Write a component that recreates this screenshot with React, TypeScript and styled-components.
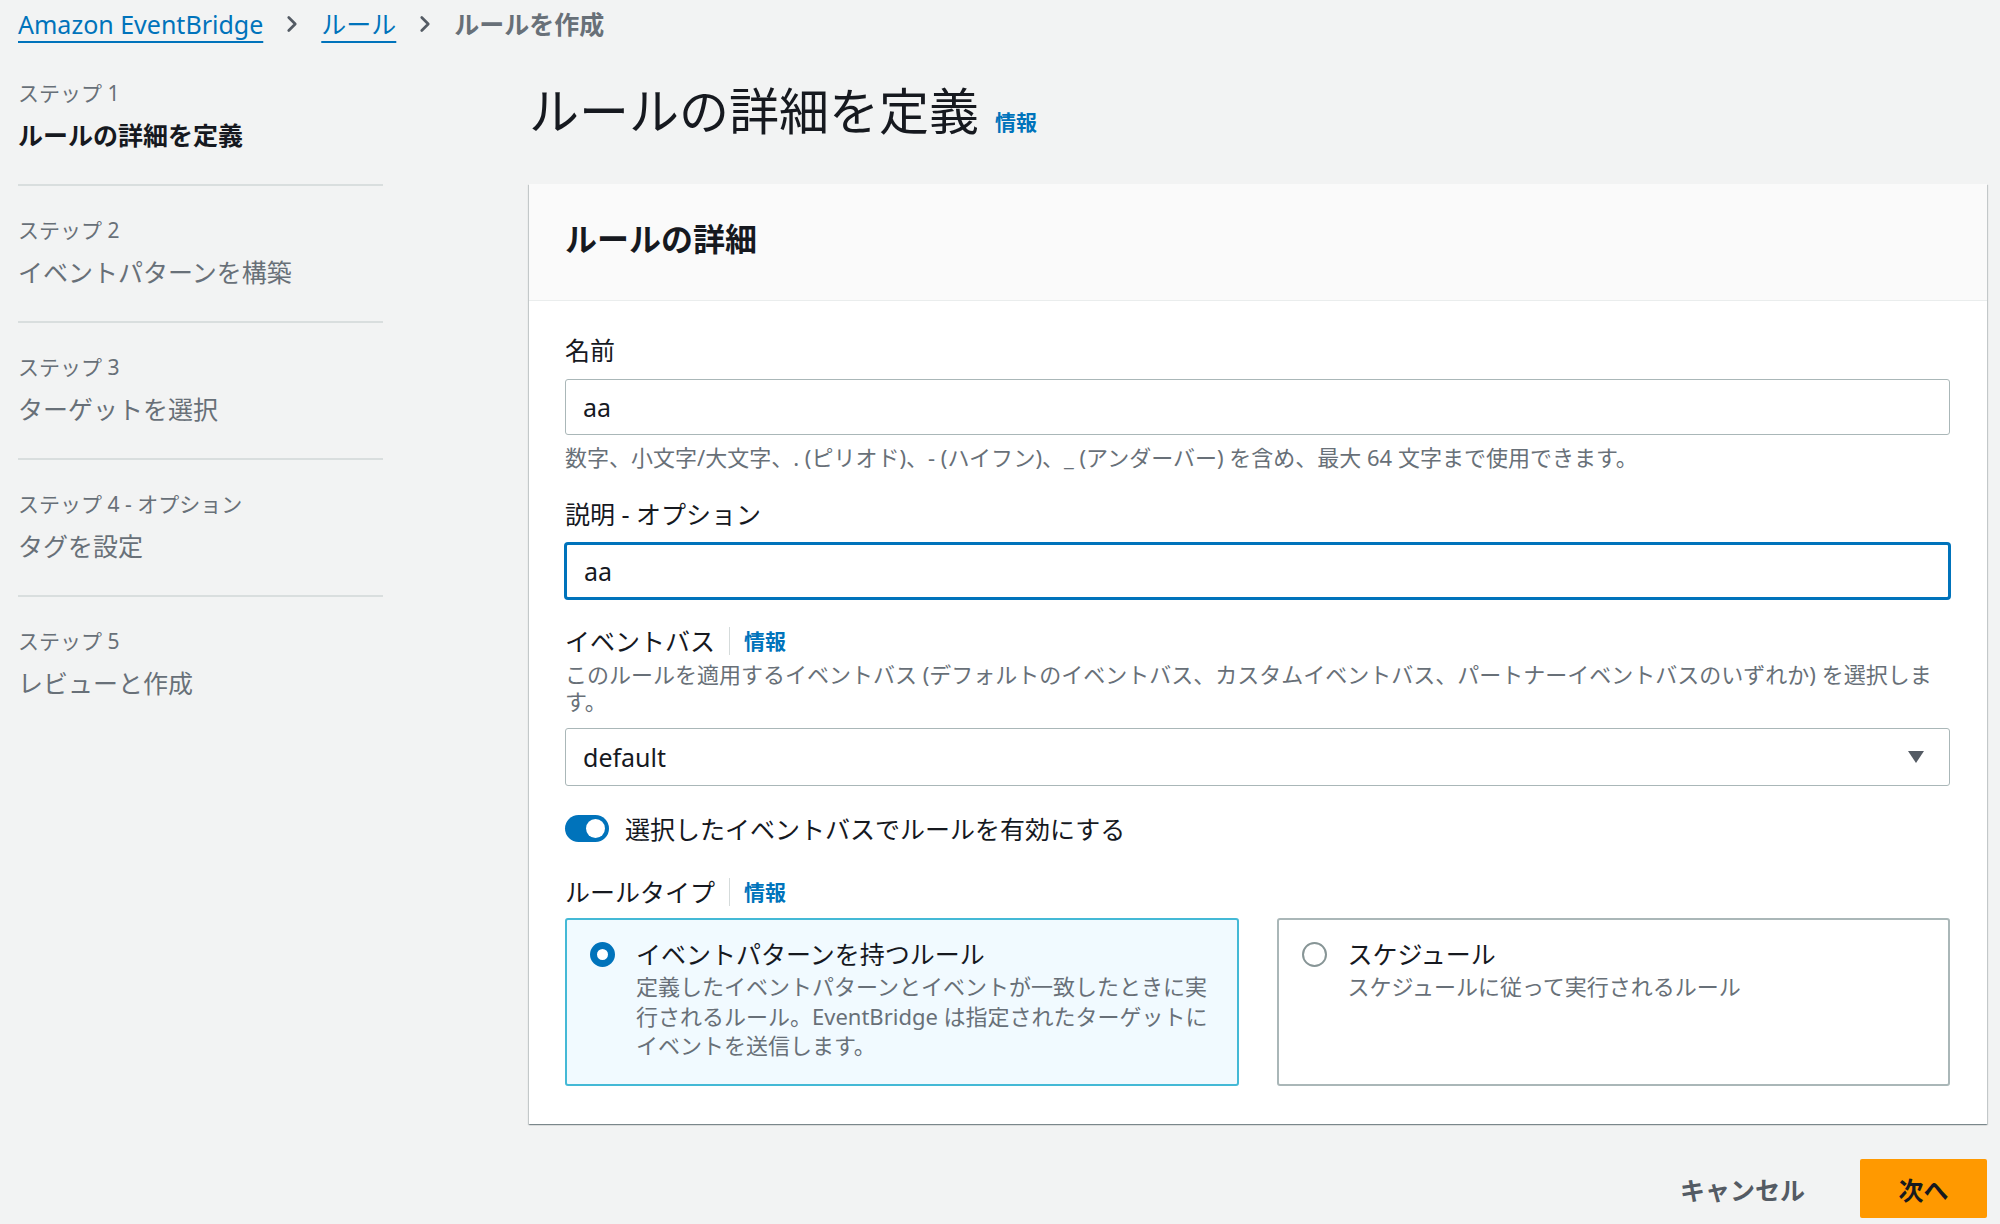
import React from 'react';
import styled, { createGlobalStyle } from 'styled-components';
import { ChevronRight } from 'lucide-react';

const GlobalStyle = createGlobalStyle`
    html, body {
        margin: 0;
        padding: 0;
        background: #f2f3f3;
    }
    body {
        font-family: "Noto Sans", "Noto Sans CJK JP", sans-serif;
        color: #16191f;
    }
    * {
        box-sizing: border-box;
    }
`;

const Page = styled.div`
    padding: 6px 13px 0 18px;
    min-height: 1224px;
`;

const Breadcrumbs = styled.nav`
    display: flex;
    align-items: center;
    height: 36px;
    font-size: 25px;
    gap: 16px;
`;

const CrumbLink = styled.a`
    color: #0073bb;
    text-decoration: underline;
    text-decoration-thickness: 2px;
    text-underline-offset: 7px;
    line-height: 36px;
`;

const CrumbCurrent = styled.span`
    color: #687078;
    font-weight: 700;
    line-height: 36px;
`;

const Layout = styled.div`
    display: grid;
    grid-template-columns: 365px 1fr;
    column-gap: 146px;
    margin-top: 7px;
`;

const Steps = styled.ol`
    list-style: none;
    margin: 0;
    padding: 0;
`;

const Step = styled.li`
    padding: 28px 0 29px;
    border-bottom: 2px solid #d9dede;

    &:last-child {
        border-bottom: none;
    }
`;

const StepLabel = styled.div`
    font-size: 21px;
    line-height: 32px;
    color: #687078;
`;

const StepTitle = styled.div<{ active?: boolean }>`
    margin-top: 6px;
    font-size: 25px;
    line-height: 40px;
    color: ${(props) => (props.active ? '#16191f' : '#687078')};
    font-weight: ${(props) => (props.active ? 700 : 400)};
`;

const Main = styled.main`
    display: flex;
    flex-direction: column;
`;

const TitleRow = styled.div`
    display: flex;
    align-items: baseline;
    padding-top: 30px;
    margin-bottom: 41px;
`;

const PageTitle = styled.h1`
    margin: 0;
    font-size: 50px;
    line-height: 64px;
    font-weight: 400;
    color: #16191f;
`;

const Info = styled.a`
    color: #0073bb;
    font-size: 21px;
    font-weight: 700;
    text-decoration: none;
    margin-left: 16px;
`;

const Container = styled.section`
    background: #ffffff;
    box-shadow: 0 1px 1px 0 rgba(0, 28, 36, 0.3), 1px 1px 1px 0 rgba(0, 28, 36, 0.15),
        -1px 1px 1px 0 rgba(0, 28, 36, 0.15);
`;

const ContainerHeader = styled.header`
    background: #fafafa;
    border-bottom: 1px solid #eaeded;
    padding: 35px 36px 41px;
`;

const ContainerTitle = styled.h2`
    margin: 0;
    font-size: 32px;
    line-height: 40px;
    font-weight: 700;
`;

const ContainerBody = styled.div`
    display: flex;
    flex-direction: column;
    gap: 24px;
    padding: 31px 37px 38px 36px;
`;

const Field = styled.div`
    display: flex;
    flex-direction: column;
`;

const LabelRow = styled.div`
    display: flex;
    align-items: center;
    height: 36px;
`;

const Label = styled.label`
    font-size: 25px;
    line-height: 36px;
    color: #16191f;
`;

const LabelInfo = styled.a`
    color: #0073bb;
    font-size: 21px;
    font-weight: 700;
    text-decoration: none;
    margin-left: 14px;
    padding-left: 14px;
    border-left: 1px solid #d5dbdb;
    line-height: 28px;
`;

const Description = styled.div`
    margin-top: 2px;
    font-size: 22px;
    line-height: 27px;
    color: #687078;
`;

const Hint = styled.div`
    margin-top: 7px;
    font-size: 22px;
    line-height: 30px;
    color: #687078;
`;

const TextInput = styled.input<{ focused?: boolean }>`
    margin-top: 11px;
    height: 56px;
    width: 100%;
    padding: 0 17px;
    font-family: inherit;
    font-size: 25px;
    color: #16191f;
    background: #ffffff;
    border-radius: 3px;
    outline: none;
    border: ${(props) => (props.focused ? '2px solid #0073bb' : '1px solid #aab7b8')};
    box-shadow: ${(props) => (props.focused ? '0 0 0 1px #0073bb' : 'none')};
`;

const Select = styled.div`
    margin-top: 13px;
    height: 58px;
    display: flex;
    align-items: center;
    justify-content: space-between;
    padding: 0 24px 0 17px;
    border: 1px solid #aab7b8;
    border-radius: 3px;
    font-size: 25px;
    color: #16191f;
`;

const ToggleRow = styled.div`
    display: flex;
    align-items: center;
    gap: 16px;
    height: 36px;
    margin-bottom: 4px;
    font-size: 25px;
`;

const Toggle = styled.span<{ on?: boolean }>`
    position: relative;
    width: 44px;
    height: 27px;
    border-radius: 14px;
    background: ${(props) => (props.on ? '#0073bb' : '#aab7b8')};
    flex-shrink: 0;

    &::after {
        content: '';
        position: absolute;
        top: 4px;
        left: ${(props) => (props.on ? '21px' : '4px')};
        width: 19px;
        height: 19px;
        border-radius: 50%;
        background: #ffffff;
    }
`;

const Tiles = styled.div`
    margin-top: 8px;
    display: grid;
    grid-template-columns: 1fr 1fr;
    column-gap: 38px;
`;

const Tile = styled.div<{ selected?: boolean }>`
    display: flex;
    gap: 21px;
    padding: 16px 18px 22px 23px;
    min-height: 168px;
    border-radius: 3px;
    border: 2px solid ${(props) => (props.selected ? '#44b9d6' : '#aab7b8')};
    background: ${(props) => (props.selected ? '#f1faff' : '#ffffff')};
`;

const Radio = styled.span<{ checked?: boolean }>`
    width: 25px;
    height: 25px;
    margin-top: 6px;
    border-radius: 50%;
    flex-shrink: 0;
    background: #ffffff;
    border: ${(props) => (props.checked ? '7px solid #0073bb' : '2px solid #879596')};
`;

const TileText = styled.div`
    display: flex;
    flex-direction: column;
`;

const TileTitle = styled.div`
    font-size: 25px;
    line-height: 36px;
    color: #16191f;
`;

const TileDesc = styled.div`
    font-size: 22px;
    line-height: 29.5px;
    color: #687078;
`;

const Actions = styled.div`
    display: flex;
    justify-content: flex-end;
    align-items: center;
    margin-top: 35px;
`;

const CancelButton = styled.button`
    height: 59px;
    padding: 0 20px;
    margin-right: 35px;
    border: none;
    background: transparent;
    font-family: inherit;
    font-size: 25px;
    font-weight: 700;
    color: #545b64;
`;

const PrimaryButton = styled.button`
    height: 59px;
    width: 127px;
    border: none;
    border-radius: 2px;
    background: #ff9900;
    font-family: inherit;
    font-size: 25px;
    font-weight: 700;
    color: #16191f;
`;

const Caret = () => (
    <svg width="18" height="14" viewBox="0 0 18 14">
        <path d="M1 1 L17 1 L9 13 Z" fill="#545b64" />
    </svg>
);

const steps = [
    { label: 'ステップ 1', title: 'ルールの詳細を定義', active: true },
    { label: 'ステップ 2', title: 'イベントパターンを構築' },
    { label: 'ステップ 3', title: 'ターゲットを選択' },
    { label: 'ステップ 4 - オプション', title: 'タグを設定' },
    { label: 'ステップ 5', title: 'レビューと作成' },
];

const App: React.FC = () => {
    return (
        <Page>
            <GlobalStyle />
            <Breadcrumbs>
                <CrumbLink>Amazon EventBridge</CrumbLink>
                <ChevronRight size={26} color="#545b64" strokeWidth={2.5} />
                <CrumbLink>ルール</CrumbLink>
                <ChevronRight size={26} color="#545b64" strokeWidth={2.5} />
                <CrumbCurrent>ルールを作成</CrumbCurrent>
            </Breadcrumbs>
            <Layout>
                <Steps>
                    {steps.map((s) => (
                        <Step key={s.label}>
                            <StepLabel>{s.label}</StepLabel>
                            <StepTitle active={s.active}>{s.title}</StepTitle>
                        </Step>
                    ))}
                </Steps>
                <Main>
                    <TitleRow>
                        <PageTitle>ルールの詳細を定義</PageTitle>
                        <Info>情報</Info>
                    </TitleRow>
                    <Container>
                        <ContainerHeader>
                            <ContainerTitle>ルールの詳細</ContainerTitle>
                        </ContainerHeader>
                        <ContainerBody>
                            <Field>
                                <LabelRow>
                                    <Label>名前</Label>
                                </LabelRow>
                                <TextInput defaultValue="aa" />
                                <Hint>
                                    数字、小文字/大文字、. (ピリオド)、- (ハイフン)、_ (アンダーバー) を含め、最大 64 文字まで使用できます。
                                </Hint>
                            </Field>
                            <Field>
                                <LabelRow>
                                    <Label>説明 - オプション</Label>
                                </LabelRow>
                                <TextInput focused defaultValue="aa" />
                            </Field>
                            <Field>
                                <LabelRow>
                                    <Label>イベントバス</Label>
                                    <LabelInfo>情報</LabelInfo>
                                </LabelRow>
                                <Description>
                                    このルールを適用するイベントバス (デフォルトのイベントバス、カスタムイベントバス、パートナーイベントバスのいずれか) を選択します。
                                </Description>
                                <Select>
                                    <span>default</span>
                                    <Caret />
                                </Select>
                            </Field>
                            <ToggleRow>
                                <Toggle on />
                                <span>選択したイベントバスでルールを有効にする</span>
                            </ToggleRow>
                            <Field>
                                <LabelRow>
                                    <Label>ルールタイプ</Label>
                                    <LabelInfo>情報</LabelInfo>
                                </LabelRow>
                                <Tiles>
                                    <Tile selected>
                                        <Radio checked />
                                        <TileText>
                                            <TileTitle>イベントパターンを持つルール</TileTitle>
                                            <TileDesc>
                                                定義したイベントパターンとイベントが一致したときに実行されるルール。EventBridge は指定されたターゲットにイベントを送信します。
                                            </TileDesc>
                                        </TileText>
                                    </Tile>
                                    <Tile>
                                        <Radio />
                                        <TileText>
                                            <TileTitle>スケジュール</TileTitle>
                                            <TileDesc>スケジュールに従って実行されるルール</TileDesc>
                                        </TileText>
                                    </Tile>
                                </Tiles>
                            </Field>
                        </ContainerBody>
                    </Container>
                    <Actions>
                        <CancelButton>キャンセル</CancelButton>
                        <PrimaryButton>次へ</PrimaryButton>
                    </Actions>
                </Main>
            </Layout>
        </Page>
    );
};

export default App;
